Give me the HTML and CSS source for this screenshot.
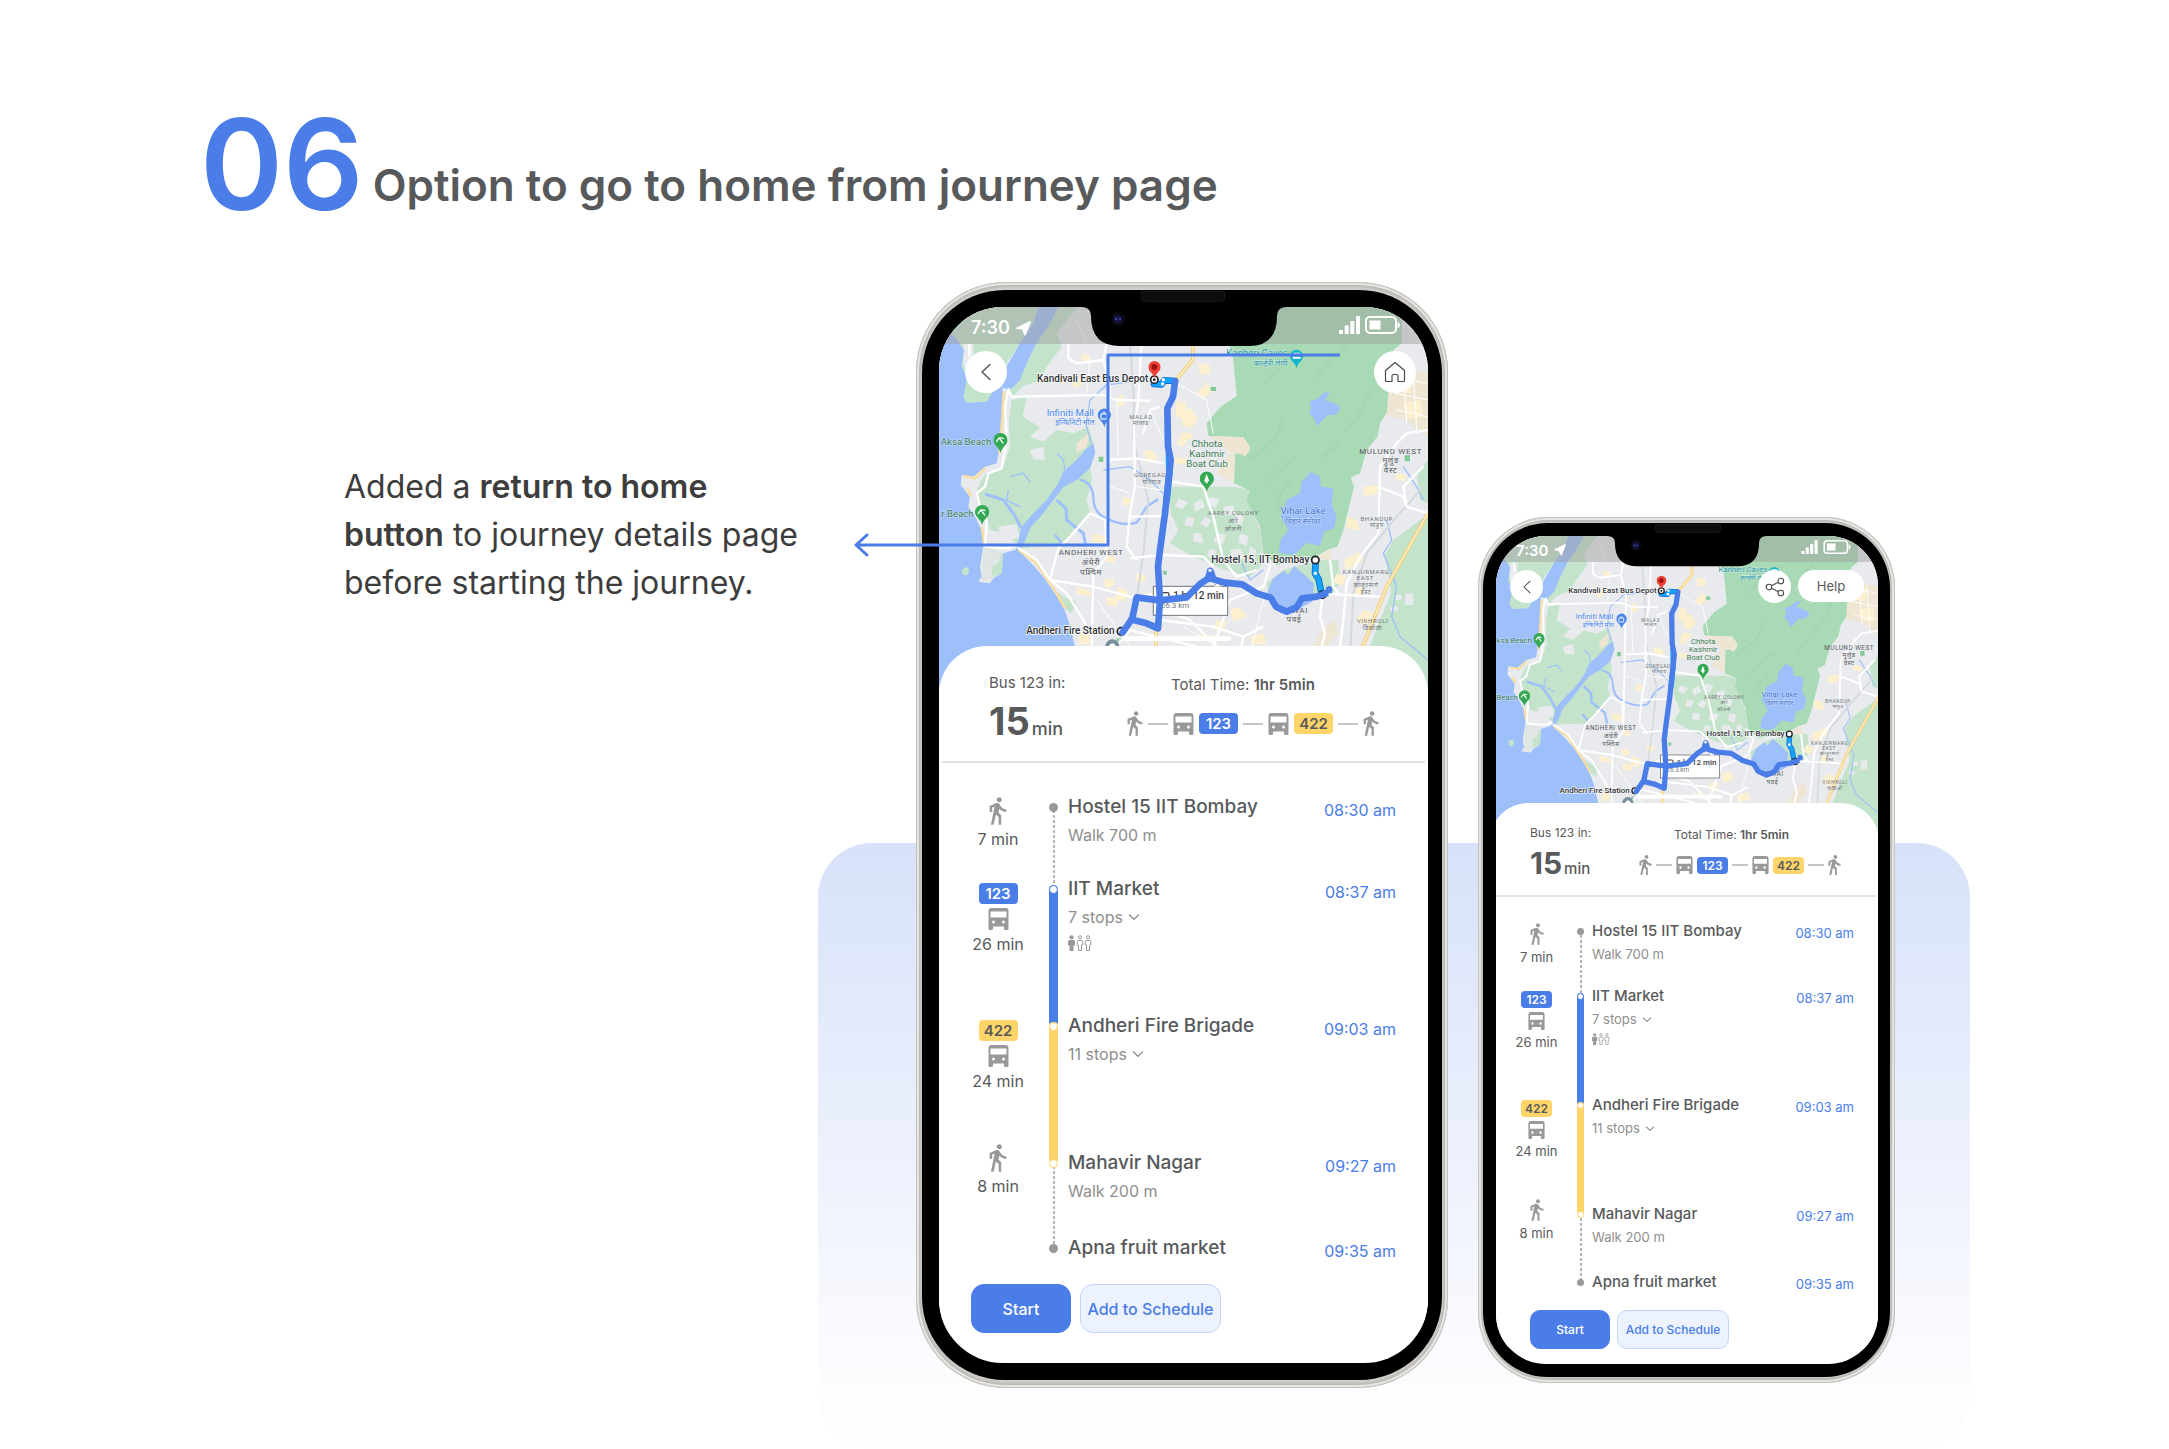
FILE: index.html
```html
<!DOCTYPE html>
<html lang="en">
<head>
<meta charset="utf-8">
<meta name="viewport" content="width=device-width, initial-scale=1">
<title>Option to go to home from journey page</title>
<link rel="stylesheet" href="styles.css">
</head>
<body>
<svg class="sprite" width="0" height="0" aria-hidden="true">
  <symbol id="i-walk" viewBox="5.5 1.5 14 21.5"><path fill="currentColor" d="M13.5 5.5c1.1 0 2-.9 2-2s-.9-2-2-2-2 .9-2 2 .9 2 2 2zM9.8 8.9L7 23h2.100l1.800-8 2.100 2v6h2v-7.500l-2.100-2 .6-3C14.800 12 16.800 13 19 13v-2c-1.900 0-3.500-1-4.300-2.400l-1-1.600c-.4-.6-1-1-1.700-1-.3 0-.5.1-.8.1L6 8.300V13h2V9.600l1.800-.7"/></symbol>
  <symbol id="i-bus" viewBox="0 0 21 22"><path fill="currentColor" fill-rule="evenodd" d="M3.500 0H17.500Q20.500 0 20.500 3V20.500Q20.500 22 19 22H17.500Q16 22 16 20.500V18.500H5V20.500Q5 22 3.500 22H2Q.5 22 .5 20.500V3Q.5 0 3.500 0ZM2.500 3.500V9.500H18.500V3.500ZM5.500 12.500a1.500 1.500 0 1 0 0 3a1.500 1.500 0 1 0 0-3ZM15.500 12.500a1.500 1.500 0 1 0 0 3a1.500 1.500 0 1 0 0-3Z"/></symbol>
  <symbol id="i-crowd" viewBox="0 0 24 16">
    <circle cx="3.500" cy="2.300" r="2.100" fill="currentColor"/><path fill="currentColor" d="M1.500 5h4q1.500 0 1.500 1.500v4H5.500V16h-4v-5.500H0v-4Q0 5 1.500 5z"/>
    <g fill="none" stroke="currentColor"><circle cx="12" cy="2.300" r="1.600"/><path d="M10.300 5.500h3.400q1 0 1 1v3.500h-1.200v5.500h-3v-5.500H9.300V6.500q0-1 1-1z"/><circle cx="20" cy="2.300" r="1.600"/><path d="M18.300 5.500h3.400q1 0 1 1v3.500h-1.200v5.500h-3v-5.500h-1.200V6.500q0-1 1-1z"/></g>
  </symbol>
  <symbol id="i-chevron" viewBox="0 0 12 8"><path fill="none" stroke="currentColor" stroke-width="1.300" stroke-linecap="round" stroke-linejoin="round" d="M1.500 2L6 6.300L10.500 2"/></symbol>
  <symbol id="i-back" viewBox="0 0 10 18"><path fill="none" stroke="currentColor" stroke-width="1.300" stroke-linecap="round" stroke-linejoin="round" d="M9 1.500L1 9L9 16.500"/></symbol>
  <symbol id="i-home" viewBox="0 0 22 22"><path fill="none" stroke="currentColor" stroke-width="1.200" stroke-linejoin="round" d="M1.500 9.500L11 1.500L20.500 9.500V19.500Q20.500 20.500 19.500 20.500H14V15Q14 13.500 12.500 13.500H9.500Q8 13.500 8 15V20.500H2.500Q1.500 20.500 1.500 19.500Z"/></symbol>
  <symbol id="i-share" viewBox="0 0 20 20"><g fill="none" stroke="currentColor" stroke-width="1.100"><circle cx="4" cy="10" r="2.800"/><circle cx="15.800" cy="4" r="2.800"/><circle cx="15.800" cy="16" r="2.800"/><path d="M6.500 8.700L13.300 5.300M6.500 11.300L13.300 14.700"/></g></symbol>
  <symbol id="i-nav" viewBox="0 0 15 15"><path fill="currentColor" d="M14 0L.6 6.600Q-.3 7.400.8 7.900L5.800 8.600L8.300 14Q9.200 15.200 9.800 14L15 1Q15 0 14 0Z"/></symbol>
  <symbol id="i-signal" viewBox="0 0 21 18"><path fill="currentColor" d="M0 14h4v4H0zM5.700 9.500h4V18h-4zM11.300 5h4v13h-4zM17 0h4v18h-4z"/></symbol>
  <symbol id="i-battery" viewBox="0 0 35 18"><rect x="1" y="1" width="30" height="16" rx="4" fill="none" stroke="currentColor" stroke-width="2"/><rect x="4.500" y="4.500" width="11" height="9" fill="currentColor"/><path fill="currentColor" d="M32.500 5.500Q35 7 35 9T32.500 12.500Z"/></symbol>
  <symbol id="notch" viewBox="0 0 206 40">
    <path fill="#000" d="M0 0H206Q196 0 196 9Q196 39 168 39H39Q10 39 10 9Q10 0 0 0Z"/>
    <circle cx="37" cy="12" r="7" fill="#0a0a14"/><circle cx="37" cy="12" r="4" fill="#14143f"/><circle cx="35" cy="12" r="1.300" fill="#3344a8"/><circle cx="39" cy="12" r="1.300" fill="#2a389a"/>
  </symbol>
  <symbol id="pin" viewBox="0 0 44 62"><path d="M22 0a22 22 0 0 1 22 22C44 38 26 42 22 62C18 42 0 38 0 22A22 22 0 0 1 22 0z"/></symbol>

  <symbol id="map-base" viewBox="27 21 1467 1140">
    <rect x="27" y="21" width="1467" height="1140" fill="#e8eaed"/>
    <g fill="#c3e3cb">
      <path d="M27 21H330L310 70L270 130L230 190L205 260L170 305L110 308L100 290L60 150L27 60Z"/>
      <path d="M370 21H445L410 60L380 100L395 140L350 200L330 240L275 260L250 290L230 270L270 230L300 170L340 90Z"/>
      <path d="M245 300L290 290L278 350L330 382L300 410L340 425L380 390L430 400L475 380L490 430L496 460L480 500L486 540L470 600L480 640L430 690L400 740L320 742L270 745L230 700L180 690L165 640L140 600L142 565L165 522L220 500L240 440L236 370Z"/>
      <path d="M160 740L220 760L215 820L190 832L160 800Z"/>
      <path d="M372 868L400 890L438 905L425 940L405 925Z"/>
      <path d="M715 560L910 560L960 570L952 600L990 690L1000 790L960 830L880 808L780 765L720 730L745 690L722 640Z"/>
      <path d="M1494 640L1470 660L1390 720L1365 765L1384 880L1350 960L1320 1040L1430 1100L1494 1161Z"/>
      <path d="M1010 850L1060 810L1130 790L1170 780L1225 780L1230 850L1200 890L1020 900Z"/>
      <path d="M1494 480L1460 520L1470 600L1494 610Z"/>
    </g>
    <g fill="#e8eaed">
      <path d="M100 132L130 132L130 205L150 200L140 180L110 210L100 195Z"/>
      <path d="M380 215L400 205L400 235L370 238ZM300 450L340 440L345 480L310 478ZM205 680L260 672L270 715L215 720Z"/>
      <path d="M745 595l30 12l-18 20l-22 -8zM790 610l25 -12l10 22l-30 15zM840 590l30 8l-15 25l-25 -8zM880 620l30 -5l5 30l-30 2zM770 650l25 5l-10 25l-22 -5zM825 650l20 10l-15 24l-20 -14zM920 640l22 12l-8 26l-24 -12zM860 700l30 5l-12 28l-28 -8zM930 700l25 8l-5 30l-25 -10zM790 700l25 0l5 30l-30 -5zM900 750l30 -5l15 30l-35 10zM960 740l18 10l-4 35l-20 -15zM840 745l20 8l-10 22l-20 -8z"/>
      <path d="M1395 885h20v15h-20zM1425 880h25v35h-25zM1380 920h25v12h-25z"/>
    </g>
    <path fill="#a8dab5" d="M850 21H1415V130L1390 150L1376 270V330L1350 370L1342 410L1310 450L1290 520L1262 532L1272 560L1240 690L1222 740L1190 750L1150 775L1040 795L1000 760L990 680L950 600L960 572L912 550L915 460L950 462L960 440L940 412L835 408L830 370L872 320L920 288L910 180L895 130Z"/>
    <g fill="none" stroke="#9fd2ad" stroke-width="9" opacity=".5"><path d="M960 480L1010 440L1040 410L1060 350M1000 560L1060 500L1100 470M1160 230L1210 180L1250 130M1240 400L1290 340L1320 270M1180 470L1230 430M1000 250L1050 200L1090 140M1060 640L1040 600L1080 540"/></g>
    <g fill="#eee6d3">
      <path d="M1376 270L1395 210L1494 220V410L1430 360L1370 345Z"/>
      <path d="M835 408L940 412L960 440L950 462L915 460L912 550L860 520L900 460Z"/>
      <path d="M1180 985L1215 960L1225 1000L1180 1050L1150 1100L1120 1090ZM960 450L945 470L905 440L930 420ZM440 430L480 395L470 440L440 460ZM1165 770L1200 745L1205 790Z"/>
    </g>
    <g fill="#9dc0fb">
      <path d="M27 21L50 90L75 112L102 150L95 200L112 230L100 290L110 308L170 305L210 255L218 265L215 380L208 450L200 490L165 500L130 530L95 525L92 555L120 590L115 620L135 650L155 690L160 740L150 800L155 830L145 845L180 850L190 835L215 820L220 760L262 748L300 785L340 830L375 880L400 920L420 975L435 1040V1161H27Z"/>
      <path d="M325 21H385L360 70L320 130L290 190L270 240L240 270L215 262L170 305L210 240L235 190L270 130L310 70Z"/>
      <path d="M258 750L275 680L310 640L350 600L385 550L400 515L440 480L470 445L490 430L496 460L480 505L440 540L400 562L370 600L340 640L300 685L285 725L268 752Z"/>
      <path d="M1138 305L1165 295L1178 280L1200 276L1185 300L1228 316L1230 330L1215 345L1192 345L1162 378L1150 352L1138 340L1144 322Z"/>
      <path d="M1130 530L1142 515L1168 528L1173 560L1210 565L1205 615L1220 650L1212 685L1182 695L1170 738L1130 728L1092 765L1046 758L1052 720L1075 690L1052 650L1070 600L1110 580L1115 545Z"/>
      <path d="M1012 875L1030 835L1062 812L1075 825L1092 798L1130 830L1152 852L1146 905L1110 925L1070 942L1040 925L1022 900Z"/>
    </g>
    <g fill="#c3e3cb"><path d="M95 812Q105 795 116 806Q120 820 108 826Q98 826 95 812Z"/></g>
    <path fill="#e0e6e4" d="M158 742L215 758L205 790L185 800L188 838L148 846L158 825Z"/>
    <g fill="none" stroke="#9dc0fb" stroke-width="6">
      <path d="M275 685L250 640L220 600L165 582M380 600L408 625L410 660L460 700L468 740" stroke-width="9"/>
      <path d="M450 540Q485 545 490 590Q490 640 530 655Q580 680 620 668L650 620L685 597" stroke-width="7"/>
      <path d="M484 430L468 375L480 300L530 255L600 245L640 240M405 510L400 480L380 460M240 530L280 520L300 545M270 620L230 600L235 570M520 510L600 500L660 540L700 580" stroke-width="4"/>
      <path d="M375 705L400 735M560 80L640 110M440 540L445 530" stroke-width="8"/>
      <path d="M1370 660L1385 720L1360 760L1400 860L1385 950L1410 1010L1494 1080M1420 500L1460 560L1480 600M935 790L960 840L1000 810" stroke-width="4"/>
    </g>
    <g fill="#fdf0cf">
      <path d="M420 240l30 -8l10 20l-25 14zM455 160l30 10l-10 20l-20 -5zM490 700l40 10l-5 25l-40 -12zM560 290l20 -5l5 30l-22 5zM640 455l25 -5l20 25l-30 15zM580 590l25 8l-8 20l-20 -4zM565 860l30 15l-10 30l-30 -10zM440 860l40 12l5 18l-45 -8zM520 840l30 -5l5 20l-28 10zM740 300l30 10l-8 45l-25 -5zM750 400l22 12l-10 30l-20 -8zM735 470l35 5l-5 20l-30 -6zM530 760l30 15l-10 15l-25 -8zM620 820l30 8l-10 20l-24 -8zM530 890l35 6l-6 25l-32 -8zM450 1000l30 5l-2 30l-32 -3z"/>
      <path d="M805 190l35 5l0 25l-30 4zM830 245l15 30l-25 20l-20 -15zM755 330l25 -5l25 30l-20 30l-30 -10zM760 395l28 8l-5 18l-28 -6zM1300 560l45 -5l-5 28l-38 5zM1250 650l30 10l10 30l-40 -5zM1240 780l50 -25l10 25l-50 30zM1220 820l30 12l-15 25l-25 -10zM900 930l30 -10l20 30l-40 15zM960 1010l40 -10l10 30l-45 5zM860 960l30 6l-10 30l-30 -8zM1400 210l50 20l-10 50l-40 -10zM1420 310l50 -10l10 50l-50 5zM1280 860l20 4l-5 26l-20 -5zM1300 930l30 8l-20 40l-30 -20zM810 1000l40 8l-8 20l-35 -8zM1400 520l30 5l-5 20l-30 -8z"/>
    </g>
    <g fill="#81c995"><path d="M506 470h14v16h-14zM842 261h16v12h-16zM1424 466h16v18h-16zM700 812h10v12h-10zM560 1015h14v16h-14z"/></g>
    <g fill="none" stroke="#f8deA2" stroke-width="8"><path d="M222 275L215 380L208 460M165 505L135 535L100 528M112 565L122 590M155 680L163 730M265 748L320 790L380 880L405 925"/></g>
    <g fill="none" stroke="#d5d8dc" stroke-width="6"><path d="M600 130L612 300L610 420L655 600L640 760L620 900L560 1040M1480 560L1400 650L1310 760L1270 880L1262 1040"/></g>
    <g fill="none" stroke="#fff" stroke-width="7" stroke-linejoin="round">
      <path d="M118 132V170M235 265L245 290L520 285L560 300L660 302M235 270L225 320L230 420L215 505L175 520L165 560L140 580L150 620L170 660L165 740L230 745L262 735"/>
      <path d="M415 130V175L440 190L520 180L530 130M520 180L540 260L535 480L530 740M635 130L625 300L612 380L615 560L600 640L590 740L620 780M530 480L620 475L700 490"/>
      <path d="M480 640L430 700L385 745L360 840L490 860L600 890L690 880M480 640L525 660L530 770L490 820L485 1040M262 742L320 780L360 840L410 880L460 960L485 1010M600 650L700 648M600 775L690 765L820 770L850 800M625 890L800 880L830 830M690 320L660 330L640 400"/>
      <path d="M560 1040L600 990L680 1010L800 1040M700 930L780 960L860 1040M690 960L850 980L940 1010M850 1040L900 900L1000 860L1020 800L990 760M720 545L820 560L850 650L880 780L920 830L980 810"/>
      <path d="M1494 390L1430 400L1400 430L1350 500L1345 700L1290 770L1250 850L1240 960L1230 1040M1345 560L1420 590L1430 620L1494 640M1430 620L1420 560L1480 500M1190 880L1240 885L1350 890M1180 870L1170 950L1185 1000L1170 1060M1200 780L1210 860L1230 885M1000 980L940 1010L930 1060"/>
    </g>
    <g fill="none" stroke="#fff" stroke-width="3">
      <path d="M1400 230L1490 250M1395 280L1494 300M1400 330L1494 350M1420 220L1430 370M1450 220L1460 390M440 60L470 130M560 300L565 470M480 170L470 280M660 330L700 420M620 560L700 570M540 560L600 580M740 250L830 300L850 400M770 440L900 500M500 900L600 1040M760 980L900 1060M1000 900L960 1060"/>
    </g>
    <g fill="none" stroke-linejoin="round"><path stroke="#f3cf79" stroke-width="11" d="M735 243L788 180L790 120M1494 640L1370 860L1290 1060M678 985V1060"/><path stroke="#fff3cf" stroke-width="4" d="M735 243L788 180L790 120M1494 640L1370 860L1290 1060M678 985V1060"/></g>
    <rect x="670" y="859" width="223" height="87" fill="#fff" stroke="#70757a" stroke-width="3"/>
    <path d="M850 860L862 849L876 860" fill="#fff" stroke="#70757a" stroke-width="2"/>
    <rect x="693" y="878" width="24" height="26" rx="5" fill="none" stroke="#3c4043" stroke-width="4"/>
  </symbol>

  <symbol id="map-route" viewBox="27 21 1467 1140">
    <g fill="none" stroke-linejoin="round" stroke-linecap="round">
      <path stroke="#1967d2" stroke-width="20" d="M672 252L695 253L703 241L735 243M1157 785L1155 820L1166 838L1174 878"/>
      <path stroke="#12a4ff" stroke-width="15" d="M672 252L695 253L703 241L735 243M1157 785L1155 820L1166 838L1174 878"/>
      <path stroke="#12a4ff" stroke-width="20" d="M717 460L718 520L710 600"/>
      <circle cx="1177" cy="884" r="11" stroke="#202124" stroke-width="5" fill="#fff"/>
      <path stroke="#4a7de7" stroke-width="20" d="M735 245L729 290L712 325L714 440L722 480L705 640L690 750L684 800L690 900L684 985L650 970L610 960"/>
      <circle cx="573" cy="994" r="11" stroke="#202124" stroke-width="5" fill="#fff"/>
      <path stroke="#4a7de7" stroke-width="20" d="M578 997L607 955L620 892L690 901L770 892L810 852L837 834L842 815L850 838L885 848L937 853L980 880L1022 893L1038 920L1070 935L1100 922L1116 895L1160 890L1195 878L1197 868"/>
    </g>
    <path fill="#4a7de7" d="M820 846L830 815Q830 803 842 802Q850 805 850 815L856 846Z"/>
    <g fill="#fff"><circle cx="840" cy="811" r="5"/><circle cx="1156" cy="820" r="5"/><circle cx="1200" cy="884" r="5"/><circle cx="700" cy="239" r="5"/><circle cx="698" cy="252" r="5"/><rect x="578" y="1009" width="325" height="14" rx="7"/></g>
    <circle cx="1156" cy="780" r="11" stroke="#202124" stroke-width="5" fill="#fff"/>
    <circle cx="673" cy="239" r="11" stroke="#202124" stroke-width="5" fill="#fff"/><circle cx="673" cy="239" r="4" fill="#202124"/>
    <use href="#pin" x="655" y="183" width="37" height="52" fill="#ea4335"/><circle cx="673" cy="201" r="9" fill="#a50e0e"/>
    <use href="#pin" x="503" y="323" width="40" height="61" fill="#4a86e8"/><path d="M513 342h18v15h-18zM517 342q5-12 10 0" fill="none" stroke="#fff" stroke-width="3"/>
    <use href="#pin" x="190" y="398" width="43" height="62" fill="#34a853"/><path d="M199 426q8-18 22-10M206 412l14 18" fill="none" stroke="#fff" stroke-width="4"/>
    <use href="#pin" x="135" y="614" width="43" height="62" fill="#34a853"/><path d="M144 642q8-18 22-10M151 628l14 18" fill="none" stroke="#fff" stroke-width="4"/>
    <use href="#pin" x="809" y="514" width="43" height="62" fill="#34a853"/><path d="M830 522l8 22h-5v6h-6v-6h-5z" fill="#fff"/>
    <use href="#pin" x="1080" y="147" width="39" height="60" fill="#12b5cb"/><path d="M1088 170h24v6h-24zM1091 158h18l2 7h-22z" fill="#fff"/>
    <circle cx="547" cy="1039" r="21" fill="#78909c"/><path d="M535 1040q12-20 24 0z" fill="#fff"/>
  </symbol>
</svg>

<header class="heading">
  <span class="heading__number">06</span>
  <h1 class="heading__title">Option to go to home from journey page</h1>
</header>

<main class="stage">
  <p class="note">Added a <strong>return to home button</strong> to journey details page before starting the journey.</p>

  <section class="showcase">
    <div class="panel"></div>
    <div class="phones">

      <article class="phone">
        <div class="phone__bezel">
          <div class="phone__screen">
            <svg class="notch" aria-hidden="true"><use href="#notch"/></svg>
            <div class="canvas">
              <div class="map">
                <svg class="map__art" viewBox="27 21 1467 1140" role="img" aria-label="Route map">
                  <use href="#map-base" x="27" y="21" width="1467" height="1140"/>
                  <g class="t-area" text-anchor="middle">
                    <text x="633" y="356">MALAD</text><text x="633" y="374">मालाड</text>
                    <text x="660" y="532">GOREGAO</text><text x="666" y="551">गोरेगाव</text>
                    <text x="910" y="646">AAREY COLONY</text><text x="910" y="668">आरे</text><text x="910" y="692">कॉलनी</text>
                    <text x="1340" y="662">BHANDUP</text><text x="1340" y="681">भांडुप</text>
                    <text x="1308" y="821">KANJURMARG</text><text x="1306" y="839">EAST</text><text x="1308" y="860">कांजुरमार्ग</text><text x="1308" y="883">ईस्ट</text>
                    <text x="1328" y="970">VIKHROLI</text><text x="1328" y="990">विक्रोळी</text>
                  </g>
                  <g class="t-district" text-anchor="middle">
                    <text x="483" y="765">ANDHERI WEST</text><text x="483" y="794">अंधेरी</text><text x="483" y="824">पश्चिम</text>
                    <text x="1382" y="461">MULUND WEST</text><text x="1382" y="490">मुलुंड</text><text x="1382" y="519">वेस्ट</text>
                    <text x="1092" y="940">POWAI</text><text x="1092" y="967">पवई</text>
                  </g>
                  <g class="t-place">
                    <g fill="#3a7a52"><text x="184" y="436" text-anchor="end">Aksa Beach</text><text x="131" y="652" text-anchor="end">r Beach</text><text x="831" y="440" text-anchor="middle">Chhota</text><text x="831" y="471" text-anchor="middle">Kashmir</text><text x="831" y="502" text-anchor="middle">Boat Club</text></g>
                    <g fill="#4a86e8"><text x="350" y="347">Infiniti Mall</text><text class="t-small" x="376" y="376">इन्फिनिटी मॉल</text></g>
                    <g fill="#3f6fd0" text-anchor="middle"><text x="1119" y="641">Vihar Lake</text><text class="t-small" x="1119" y="671">विहार सरोवर</text></g>
                    <g fill="#1a94a8" text-anchor="end"><text x="1073" y="169">Kanheri Caves</text><text class="t-small" x="1073" y="199">कान्हेरी लेणी</text></g>
                  </g>
                  <g class="t-stop"><text x="655" y="246">Kandivali East Bus Depot</text><text x="1138" y="788">Hostel 15, IIT Bombay</text><text x="554" y="1001">Andheri Fire Station</text></g>
                  <text class="t-time" x="730" y="898">1 hr 12 min</text><text class="t-km" x="692" y="924">26.3 km</text>
                  <use href="#map-route" x="27" y="21" width="1467" height="1140"/>
                </svg>
                <div class="map__overlay">
                  <div class="status">
                    <span class="status__time">7:30</span>
                    <svg class="status__nav" aria-hidden="true"><use href="#i-nav"/></svg>
                    <svg class="status__signal" aria-hidden="true"><use href="#i-signal"/></svg>
                    <svg class="status__battery" aria-hidden="true"><use href="#i-battery"/></svg>
                  </div>
                  <div class="controls">
                    <button class="round" type="button" aria-label="Back"><svg class="round__back"><use href="#i-back"/></svg></button>
                    <button class="round round--end" type="button" aria-label="Home"><svg class="round__icon"><use href="#i-home"/></svg></button>
                  </div>
                </div>
              </div>

              <div class="sheet">
                <div class="summary">
                  <div class="next">
                    <p class="next__label">Bus 123 in:</p>
                    <p class="next__value"><strong>15</strong>min</p>
                  </div>
                  <div class="total">
                    <p class="total__label">Total Time: <strong>1hr 5min</strong></p>
                    <div class="legs">
                      <svg class="walk" aria-hidden="true"><use href="#i-walk"/></svg><i class="dash"></i>
                      <svg class="bus" aria-hidden="true"><use href="#i-bus"/></svg><span class="badge">123</span><i class="dash"></i>
                      <svg class="bus" aria-hidden="true"><use href="#i-bus"/></svg><span class="badge badge--yellow">422</span><i class="dash"></i>
                      <svg class="walk" aria-hidden="true"><use href="#i-walk"/></svg>
                    </div>
                  </div>
                </div>
                <ol class="steps">
                  <li class="step step--first">
                    <div class="mode"><svg class="walk walk--lg" aria-hidden="true"><use href="#i-walk"/></svg><span>7 min</span></div>
                    <div class="rail rail--dots"><i class="dot"></i></div>
                    <div class="stop"><h2>Hostel 15 IIT Bombay</h2><p>Walk 700 m</p></div>
                    <time>08:30 am</time>
                  </li>
                  <li class="step step--ride">
                    <div class="mode mode--ride"><span class="badge">123</span><svg class="bus" aria-hidden="true"><use href="#i-bus"/></svg><span>26 min</span></div>
                    <div class="rail rail--blue"><i class="ring"></i></div>
                    <div class="stop"><h2>IIT Market</h2><button class="stops" type="button">7 stops <svg class="stops__chevron"><use href="#i-chevron"/></svg></button><svg class="crowd" role="img" aria-label="Low crowd"><use href="#i-crowd"/></svg></div>
                    <time>08:37 am</time>
                  </li>
                  <li class="step step--ride">
                    <div class="mode mode--ride"><span class="badge badge--yellow">422</span><svg class="bus" aria-hidden="true"><use href="#i-bus"/></svg><span>24 min</span></div>
                    <div class="rail rail--yellow"><i class="ring"></i></div>
                    <div class="stop"><h2>Andheri Fire Brigade</h2><button class="stops" type="button">11 stops <svg class="stops__chevron"><use href="#i-chevron"/></svg></button></div>
                    <time>09:03 am</time>
                  </li>
                  <li class="step step--walk">
                    <div class="mode mode--last"><svg class="walk walk--lg" aria-hidden="true"><use href="#i-walk"/></svg><span>8 min</span></div>
                    <div class="rail rail--dots"><i class="ring"></i></div>
                    <div class="stop"><h2>Mahavir Nagar</h2><p>Walk 200 m</p></div>
                    <time>09:27 am</time>
                  </li>
                  <li class="step">
                    <div class="mode"></div>
                    <div class="rail"><i class="dot"></i></div>
                    <div class="stop"><h2>Apna fruit market</h2></div>
                    <time>09:35 am</time>
                  </li>
                </ol>
                <div class="actions">
                  <button class="action action--primary" type="button">Start</button>
                  <button class="action" type="button">Add to Schedule</button>
                </div>
              </div>
            </div>
          </div>
        </div>
      </article>

      <article class="phone phone--compact">
        <div class="phone__bezel">
          <div class="phone__screen">
            <svg class="notch" aria-hidden="true"><use href="#notch"/></svg>
            <div class="canvas">
              <div class="map">
                <svg class="map__art" viewBox="27 21 1467 1140" role="img" aria-label="Route map">
                  <use href="#map-base" x="27" y="21" width="1467" height="1140"/>
                  <g class="t-area" text-anchor="middle">
                    <text x="633" y="356">MALAD</text><text x="633" y="374">मालाड</text>
                    <text x="660" y="532">GOREGAO</text><text x="666" y="551">गोरेगाव</text>
                    <text x="910" y="646">AAREY COLONY</text><text x="910" y="668">आरे</text><text x="910" y="692">कॉलनी</text>
                    <text x="1340" y="662">BHANDUP</text><text x="1340" y="681">भांडुप</text>
                    <text x="1308" y="821">KANJURMARG</text><text x="1306" y="839">EAST</text><text x="1308" y="860">कांजुरमार्ग</text><text x="1308" y="883">ईस्ट</text>
                    <text x="1328" y="970">VIKHROLI</text><text x="1328" y="990">विक्रोळी</text>
                  </g>
                  <g class="t-district" text-anchor="middle">
                    <text x="483" y="765">ANDHERI WEST</text><text x="483" y="794">अंधेरी</text><text x="483" y="824">पश्चिम</text>
                    <text x="1382" y="461">MULUND WEST</text><text x="1382" y="490">मुलुंड</text><text x="1382" y="519">वेस्ट</text>
                    <text x="1092" y="940">POWAI</text><text x="1092" y="967">पवई</text>
                  </g>
                  <g class="t-place">
                    <g fill="#3a7a52"><text x="184" y="436" text-anchor="end">ksa Beach</text><text x="131" y="652" text-anchor="end">Beach</text><text x="831" y="440" text-anchor="middle">Chhota</text><text x="831" y="471" text-anchor="middle">Kashmir</text><text x="831" y="502" text-anchor="middle">Boat Club</text></g>
                    <g fill="#4a86e8"><text x="350" y="347">Infiniti Mall</text><text class="t-small" x="376" y="376">इन्फिनिटी मॉल</text></g>
                    <g fill="#3f6fd0" text-anchor="middle"><text x="1119" y="641">Vihar Lake</text><text class="t-small" x="1119" y="671">विहार सरोवर</text></g>
                    <g fill="#1a94a8" text-anchor="end"><text x="1073" y="169">Kanheri Caves</text><text class="t-small" x="1073" y="199">कान्हेरी लेणी</text></g>
                  </g>
                  <g class="t-stop"><text x="655" y="246">Kandivali East Bus Depot</text><text x="1138" y="788">Hostel 15, IIT Bombay</text><text x="554" y="1001">Andheri Fire Station</text></g>
                  <text class="t-time" x="730" y="898">1 hr 12 min</text><text class="t-km" x="692" y="924">26.3 km</text>
                  <use href="#map-route" x="27" y="21" width="1467" height="1140"/>
                </svg>
                <div class="map__overlay">
                  <div class="status">
                    <span class="status__time">7:30</span>
                    <svg class="status__nav" aria-hidden="true"><use href="#i-nav"/></svg>
                    <svg class="status__signal" aria-hidden="true"><use href="#i-signal"/></svg>
                    <svg class="status__battery" aria-hidden="true"><use href="#i-battery"/></svg>
                  </div>
                  <div class="controls">
                    <button class="round" type="button" aria-label="Back"><svg class="round__back"><use href="#i-back"/></svg></button>
                    <button class="round round--end" type="button" aria-label="Share"><svg class="round__icon"><use href="#i-share"/></svg></button>
                    <button class="help" type="button">Help</button>
                  </div>
                </div>
              </div>

              <div class="sheet">
                <div class="summary">
                  <div class="next">
                    <p class="next__label">Bus 123 in:</p>
                    <p class="next__value"><strong>15</strong>min</p>
                  </div>
                  <div class="total">
                    <p class="total__label">Total Time: <strong>1hr 5min</strong></p>
                    <div class="legs">
                      <svg class="walk" aria-hidden="true"><use href="#i-walk"/></svg><i class="dash"></i>
                      <svg class="bus" aria-hidden="true"><use href="#i-bus"/></svg><span class="badge">123</span><i class="dash"></i>
                      <svg class="bus" aria-hidden="true"><use href="#i-bus"/></svg><span class="badge badge--yellow">422</span><i class="dash"></i>
                      <svg class="walk" aria-hidden="true"><use href="#i-walk"/></svg>
                    </div>
                  </div>
                </div>
                <ol class="steps">
                  <li class="step step--first">
                    <div class="mode"><svg class="walk walk--lg" aria-hidden="true"><use href="#i-walk"/></svg><span>7 min</span></div>
                    <div class="rail rail--dots"><i class="dot"></i></div>
                    <div class="stop"><h2>Hostel 15 IIT Bombay</h2><p>Walk 700 m</p></div>
                    <time>08:30 am</time>
                  </li>
                  <li class="step step--ride">
                    <div class="mode mode--ride"><span class="badge">123</span><svg class="bus" aria-hidden="true"><use href="#i-bus"/></svg><span>26 min</span></div>
                    <div class="rail rail--blue"><i class="ring"></i></div>
                    <div class="stop"><h2>IIT Market</h2><button class="stops" type="button">7 stops <svg class="stops__chevron"><use href="#i-chevron"/></svg></button><svg class="crowd" role="img" aria-label="Low crowd"><use href="#i-crowd"/></svg></div>
                    <time>08:37 am</time>
                  </li>
                  <li class="step step--ride">
                    <div class="mode mode--ride"><span class="badge badge--yellow">422</span><svg class="bus" aria-hidden="true"><use href="#i-bus"/></svg><span>24 min</span></div>
                    <div class="rail rail--yellow"><i class="ring"></i></div>
                    <div class="stop"><h2>Andheri Fire Brigade</h2><button class="stops" type="button">11 stops <svg class="stops__chevron"><use href="#i-chevron"/></svg></button></div>
                    <time>09:03 am</time>
                  </li>
                  <li class="step step--walk">
                    <div class="mode mode--last"><svg class="walk walk--lg" aria-hidden="true"><use href="#i-walk"/></svg><span>8 min</span></div>
                    <div class="rail rail--dots"><i class="ring"></i></div>
                    <div class="stop"><h2>Mahavir Nagar</h2><p>Walk 200 m</p></div>
                    <time>09:27 am</time>
                  </li>
                  <li class="step">
                    <div class="mode"></div>
                    <div class="rail"><i class="dot"></i></div>
                    <div class="stop"><h2>Apna fruit market</h2></div>
                    <time>09:35 am</time>
                  </li>
                </ol>
                <div class="actions">
                  <button class="action action--primary" type="button">Start</button>
                  <button class="action" type="button">Add to Schedule</button>
                </div>
              </div>
            </div>
          </div>
        </div>
      </article>
    </div>

    <svg class="connector" viewBox="0 0 486 206" aria-hidden="true"><path d="M485 2H254V192H2M13 182L2 192L13 202"/></svg>
  </section>
</main>
</body>
</html>
```
FILE: styles.css
```css
:root {
  --blue: #4a7de7;
  --yellow: #ffd469;
  --ink: #58595b;
  --muted: #8e8e8e;
  --icon: #999;
}

* { box-sizing: border-box; }

body {
  margin: 0;
  padding: 0 199px 0 200px;
  background: #fff;
  color: var(--ink);
  font-family: "Inter", "Noto Sans", sans-serif;
}

p, h1, h2, ol { margin: 0; padding: 0; }
svg { display: block; flex: none; }
button { margin: 0; padding: 0; border: 0; background: none; font: inherit; color: inherit; }
.sprite { position: absolute; }

/* Heading */
.heading {
  display: flex;
  align-items: flex-end;
  gap: 9px;
  height: 282px;
  padding-bottom: 54px;
}
.heading__number {
  color: var(--blue);
  font-size: 126px;
  font-weight: 600;
  line-height: 128px;
}
.heading__title {
  padding-bottom: 19px;
  font-size: 44px;
  font-weight: 600;
  line-height: 48px;
}

/* Stage */
.stage { display: flex; justify-content: space-between; }
.note {
  width: 464px;
  margin: 181px 0 0 144px;
  color: #3d3d3d;
  font-size: 32px;
  line-height: 48px;
}
.note strong { font-weight: 600; }

.showcase { position: relative; display: grid; flex: none; }
.panel {
  grid-area: 1 / 1;
  height: 606px;
  align-self: end;
  border-radius: 54px;
  background: linear-gradient(#d7e1f9, #fdfdff 90%);
}
.phones {
  grid-area: 1 / 1;
  z-index: 1;
  display: flex;
  align-items: flex-end;
  gap: 30px;
  padding: 0 75px 61px 98px;
}
.connector {
  position: absolute;
  z-index: 2;
  left: 36px;
  top: 71px;
  width: 486px;
  height: 206px;
  fill: none;
  stroke: var(--blue);
  stroke-width: 3px;
  stroke-linecap: round;
  stroke-linejoin: round;
}

/* Phone */
.phone {
  --screen-w: 489px; --canvas-w: 489px; --shift-x: 0px; --shift-y: 0px; --screen-pad: 30px;
  --frame-y: 8px; --frame-x: 6px; --bezel-y: 17px; --bezel-left: 17px; --bezel-right: 14px;
  --r-frame: 90px; --r-bezel: 83px; --r-screen: 64px; --notch-w: 206px; --notch-h: 40px;
  --speaker-w: 82px; --speaker-h: 9px;
  --map-h: 380px; --overlap: 41px; --r-sheet: 48px;
  --status-h: 37px; --status-pad: 32px; --time: 18px; --nav: 15px; --signal-w: 21px; --signal-h: 18px; --battery-w: 35px;
  --round: 42px; --round-top: 7px; --round-left: 26px; --round-right: 12px; --back-w: 10px; --back-h: 18px; --round-icon: 22px;
  --summary-h: 115px; --summary-pad: 28px; --summary-left: 50px; --total-left: 188px; --total-pad: 44px;
  --text: 15px; --text-lh: 18px; --big: 38px; --big-lh: 40px; --unit: 18px; --value-gap: 9px; --legs-gap: 17px;
  --walk-w: 16px; --walk-h: 25px; --bus-w: 21px; --bus-h: 22px; --badge-w: 39px; --badge-h: 21px; --dash: 20px; --gap: 5px;
  --steps-top: 24px; --mode-w: 110px; --mode-pad: 8px; --rail: 9px; --name-gap: 10px; --right: 32px;
  --row-walk: 82px; --row-ride: 137px; --row-walk-last: 85px; --row-end: 40px; --anchor: 20px;
  --name: 19px; --name-lh: 24px; --name-top: 8px; --sub: 16px; --sub-lh: 20px; --sub-top: 6px; --clock: 16px; --clock-top: 13px;
  --walk-lg-w: 18px; --walk-lg-h: 28px; --mode-top: 10px; --ride-top: 14px;
  --crowd-w: 24px; --crowd-h: 16px; --crowd-top: 8px; --chev-w: 12px; --chev-h: 8px;
  --actions-top: 16px; --actions-left: 32px; --actions-gap: 9px; --action-h: 49px; --start-w: 100px; --add-w: 141px; --r-action: 13px; --action: 16px;
  padding: var(--frame-y) var(--frame-x);
  border-radius: var(--r-frame);
  background: #d3d1cd;
  box-shadow: inset 0 0 0 1px #c4c2bf, inset 0 0 0 3px #e6e5e2, inset 0 0 3px 5px #b9b6b2;
}
.phone--compact {
  --screen-w: 382px; --canvas-w: 389px; --shift-x: -6px; --shift-y: -3px; --screen-pad: 15px;
  --frame-y: 6px; --frame-x: 5px; --bezel-y: 13px; --bezel-left: 13px; --bezel-right: 12px;
  --r-frame: 71px; --r-bezel: 65px; --r-screen: 50px; --notch-w: 162px; --notch-h: 31px;
  --speaker-w: 64px; --speaker-h: 7px;
  --map-h: 302px; --overlap: 32px; --r-sheet: 38px;
  --status-h: 29px; --status-pad: 26px; --time: 15px; --nav: 12px; --signal-w: 17px; --signal-h: 14px; --battery-w: 28px;
  --round: 33px; --round-top: 8px; --round-left: 20px; --round-right: 15px; --back-w: 8px; --back-h: 14px; --round-icon: 20px;
  --summary-h: 92px; --summary-pad: 22px; --summary-left: 40px; --total-left: 149px; --total-pad: 35px;
  --text: 12px; --text-lh: 15px; --big: 30px; --big-lh: 32px; --unit: 15px; --value-gap: 7px; --legs-gap: 13px;
  --walk-w: 13px; --walk-h: 20px; --bus-w: 17px; --bus-h: 18px; --badge-w: 31px; --badge-h: 17px; --dash: 16px; --gap: 4px;
  --steps-top: 18px; --mode-w: 87px; --mode-pad: 6px; --rail: 7px; --name-gap: 8px; --right: 25px;
  --row-walk: 65px; --row-ride: 109px; --row-walk-last: 68px; --row-end: 32px; --anchor: 16px;
  --name: 15px; --name-lh: 20px; --name-top: 6px; --sub: 13px; --sub-lh: 16px; --sub-top: 5px; --clock: 13px; --clock-top: 10px;
  --walk-lg-w: 14px; --walk-lg-h: 22px; --mode-top: 8px; --ride-top: 11px;
  --crowd-w: 18px; --crowd-h: 12px; --crowd-top: 6px; --chev-w: 10px; --chev-h: 7px;
  --actions-top: 12px; --actions-left: 40px; --actions-gap: 7px; --action-h: 39px; --start-w: 80px; --add-w: 112px; --r-action: 10px; --action: 12px;
  margin-bottom: 5px;
}
.phone__bezel {
  position: relative;
  padding: var(--bezel-y) var(--bezel-right) var(--bezel-y) var(--bezel-left);
  border-radius: var(--r-bezel);
  background: #000;
}
.phone__bezel::before {
  content: "";
  position: absolute;
  top: 1px;
  left: 50%;
  width: var(--speaker-w);
  height: var(--speaker-h);
  margin-left: calc(var(--speaker-w) / -2);
  border: 1px solid #161616;
  border-radius: 0 0 4px 4px;
  background: #0c0c0c;
}
.phone__screen {
  position: relative;
  width: var(--screen-w);
  overflow: hidden;
  border-radius: var(--r-screen);
  background: #fff;
}
.notch {
  position: absolute;
  z-index: 2;
  top: 0;
  left: calc(50% - var(--notch-w) / 2);
  width: var(--notch-w);
  height: var(--notch-h);
}
.canvas {
  width: var(--canvas-w);
  margin: var(--shift-y) 0 0 var(--shift-x);
  padding-bottom: var(--screen-pad);
}

/* Map */
.map { display: grid; }
.map__art { grid-area: 1 / 1; width: 100%; height: var(--map-h); font-family: "Roboto", "Noto Sans", sans-serif; }
.map__overlay { grid-area: 1 / 1; z-index: 1; }
.t-area { font-size: 18px; letter-spacing: 2px; fill: #70757a; }
.t-district { font-size: 24px; letter-spacing: 2px; fill: #55595e; }
.t-place { font-size: 29px; stroke: #fff; stroke-opacity: .5; stroke-width: 3px; paint-order: stroke; }
.t-small { font-size: 23px; }
.t-stop { font-size: 30px; font-weight: 500; text-anchor: end; fill: #303134; stroke: #fff; stroke-width: 4px; paint-order: stroke; }
.t-time { font-size: 30px; font-weight: 500; fill: #3c4043; }
.t-km { font-size: 24px; fill: #70757a; }

.status {
  display: flex;
  align-items: center;
  height: var(--status-h);
  padding: 5px 28px 0 var(--status-pad);
  background: rgba(156, 156, 156, .45);
  color: #fff;
}
.status__time { font-size: var(--time); font-weight: 600; line-height: var(--text-lh); }
.status__nav { width: var(--nav); height: var(--nav); margin-left: 6px; }
.status__signal { width: var(--signal-w); height: var(--signal-h); margin: -7px 5px 0 auto; }
.status__battery { width: var(--battery-w); height: var(--signal-h); margin-top: -7px; }

.controls { display: flex; padding: var(--round-top) var(--round-right) 0 var(--round-left); color: #4a4a4a; }
.round {
  display: grid;
  place-items: center;
  width: var(--round);
  height: var(--round);
  border-radius: 50%;
  background: #fff;
}
.round--end { margin-left: auto; }
.round__back { width: var(--back-w); height: var(--back-h); }
.round__icon { width: var(--round-icon); height: var(--round-icon); }
.help { width: 66px; height: 32px; margin-left: 7px; border-radius: 16px; background: #fff; color: var(--ink); font-size: 13px; }

/* Sheet */
.sheet {
  position: relative;
  z-index: 1;
  margin-top: calc(var(--overlap) * -1);
  border-radius: var(--r-sheet) var(--r-sheet) 0 0;
  background: #fff;
}
.summary {
  position: relative;
  display: flex;
  height: var(--summary-h);
  padding: var(--summary-pad) 0 0 var(--summary-left);
}
.summary::after {
  content: "";
  position: absolute;
  left: 3px;
  right: 3px;
  bottom: -2px;
  height: 2px;
  background: #e3e3e3;
}
.next { width: calc(var(--total-left) - var(--summary-left)); font-size: var(--text); line-height: var(--text-lh); }
.next__value { margin-top: var(--value-gap); font-size: var(--unit); font-weight: 500; line-height: var(--big-lh); }
.next__value strong { margin-right: 2px; font-size: var(--big); font-weight: 700; }
.total__label { padding: 2px 0 0 var(--total-pad); font-size: var(--text); line-height: var(--text-lh); }
.total__label strong { font-weight: 600; }
.legs { display: flex; align-items: center; gap: var(--gap); margin-top: var(--legs-gap); }

.walk { width: var(--walk-w); height: var(--walk-h); color: var(--icon); }
.walk--lg { width: var(--walk-lg-w); height: var(--walk-lg-h); }
.bus { width: var(--bus-w); height: var(--bus-h); color: var(--icon); }
.dash { width: var(--dash); height: 2px; background: #c4c4c4; }
.badge {
  width: var(--badge-w);
  height: var(--badge-h);
  border-radius: 4px;
  background: var(--blue);
  color: #fff;
  font-size: var(--text);
  font-weight: 600;
  line-height: var(--badge-h);
  text-align: center;
}
.badge--yellow { background: var(--yellow); color: var(--ink); }

/* Steps */
.steps { padding-top: calc(var(--steps-top) + 2px); list-style: none; }
.step {
  display: grid;
  grid-template-columns: var(--mode-w) var(--rail) 1fr auto;
  height: var(--row-end);
  padding-right: var(--right);
}
.step--first { height: var(--row-walk); }
.step--ride { height: var(--row-ride); }
.step--walk { height: var(--row-walk-last); }
.mode {
  display: flex;
  flex-direction: column;
  align-items: center;
  gap: 4px;
  padding: var(--mode-top) 0 0 var(--mode-pad);
  font-size: var(--sub);
  line-height: var(--sub-lh);
}
.mode--ride { padding-top: var(--ride-top); }
.mode .badge { line-height: var(--badge-h); }
.mode--last { padding-top: 1px; }

.rail { position: relative; display: flex; justify-content: center; padding-top: calc(var(--anchor) - var(--rail) / 2); }
.rail::before {
  content: "";
  position: absolute;
  top: calc(var(--anchor) - var(--rail) / 2);
  bottom: calc(var(--anchor) * -1);
  left: 50%;
  width: var(--rail);
  margin-left: calc(var(--rail) / -2);
  border-radius: 5px;
}
.rail--dots::before {
  width: 2px;
  margin-left: -1px;
  border-radius: 0;
  background: repeating-linear-gradient(transparent 0 2px, #b5b5b5 2px 5px);
}
.rail--blue::before { background: var(--blue); }
.rail--yellow::before { background: var(--yellow); }
.dot, .ring { position: relative; width: var(--rail); height: var(--rail); border-radius: 50%; background: var(--icon); }
.ring { border: 1px solid var(--yellow); background: #fff; }
.rail--blue .ring { border-color: var(--blue); }

.stop { padding: var(--name-top) 0 0 var(--name-gap); }
.stop h2 { font-size: var(--name); font-weight: 500; line-height: var(--name-lh); white-space: nowrap; }
.stop p, .stops { margin-top: var(--sub-top); color: var(--muted); font-size: var(--sub); line-height: var(--sub-lh); }
.stops { display: flex; align-items: center; gap: 5px; }
.stops__chevron { width: var(--chev-w); height: var(--chev-h); }
.crowd { width: var(--crowd-w); height: var(--crowd-h); margin-top: var(--crowd-top); color: var(--icon); }
.step time { padding-top: var(--clock-top); color: var(--blue); font-size: var(--clock); line-height: var(--sub-lh); }

/* Actions */
.actions { display: flex; gap: var(--actions-gap); padding: var(--actions-top) 0 0 var(--actions-left); }
.action {
  width: var(--add-w);
  height: var(--action-h);
  border: 1px solid #c3d5fb;
  border-radius: var(--r-action);
  background: #ecf2fe;
  color: var(--blue);
  font-size: var(--action);
  font-weight: 500;
  white-space: nowrap;
}
.action--primary { width: var(--start-w); border-color: var(--blue); background: var(--blue); color: #fff; }
```
